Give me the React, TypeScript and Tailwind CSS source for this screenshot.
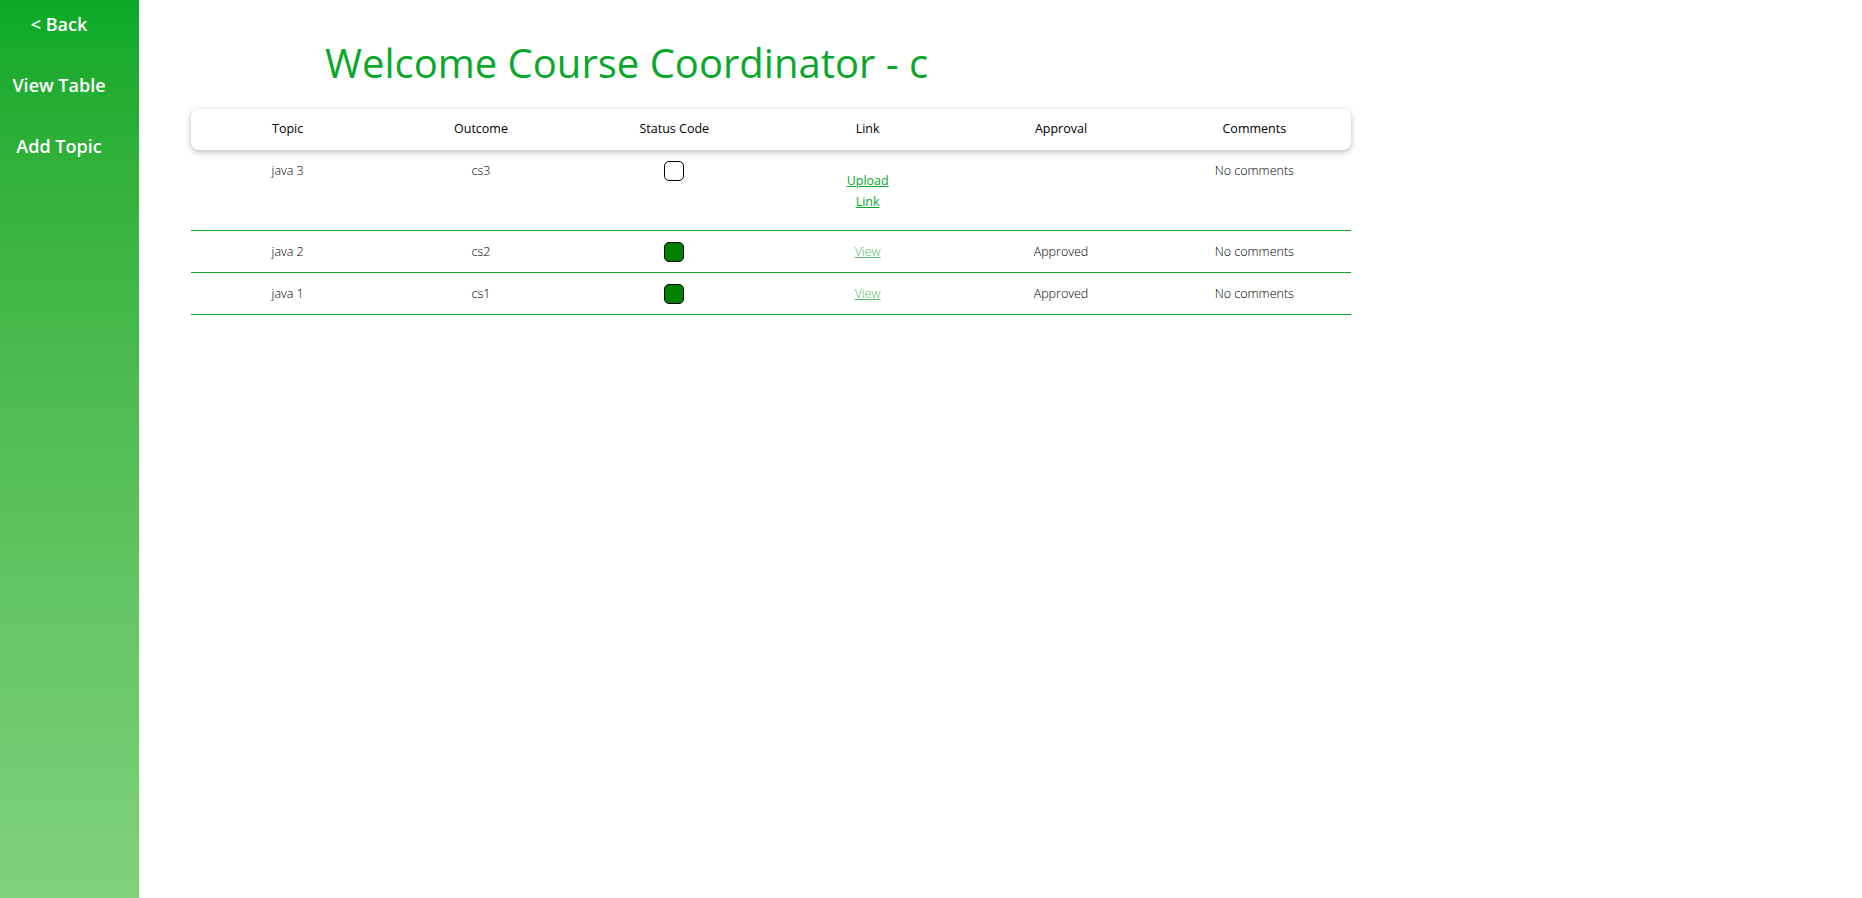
import React from 'react';

type Row = {
  topic: string;
  outcome: string;
  done: boolean;
  approval: string;
  comments: string;
};

const rows: Row[] = [
  { topic: 'java 3', outcome: 'cs3', done: false, approval: '', comments: 'No comments' },
  { topic: 'java 2', outcome: 'cs2', done: true, approval: 'Approved', comments: 'No comments' },
  { topic: 'java 1', outcome: 'cs1', done: true, approval: 'Approved', comments: 'No comments' },
];

const headers = ['Topic', 'Outcome', 'Status Code', 'Link', 'Approval', 'Comments'];

function Sidebar() {
  return (
    <aside className="w-[139px] shrink-0 min-h-screen bg-gradient-to-b from-[#07a926] to-[#80d27d]">
      <nav className="w-[118px] flex flex-col items-center pt-[11px] gap-[34px] text-white text-[18px] font-semibold">
        <a className="leading-[27px] cursor-pointer">&lt; Back</a>
        <a className="leading-[27px] cursor-pointer">View Table</a>
        <a className="leading-[27px] cursor-pointer">Add Topic</a>
      </nav>
    </aside>
  );
}

function StatusBox({ done }: { done: boolean }) {
  return (
    <span
      className={
        done
          ? 'inline-block w-5 h-5 rounded-[5px] border-[1.5px] border-black bg-[#008000]'
          : 'inline-block w-5 h-5 rounded-[5px] border-[1.5px] border-black bg-white'
      }
    />
  );
}

export default function App() {
  return (
    <div className="flex min-h-screen bg-white" style={{ fontFamily: '"Open Sans", "Noto Sans", sans-serif' }}>
      <Sidebar />

      <main className="flex-1 pl-[52px]">
        <h1 className="pl-[134px] pt-[37px] pb-[20px] text-[40px] leading-[52px] font-normal text-[#09a82a]">
          Welcome Course Coordinator - c
        </h1>

        <div className="w-[1160px]">
          {/* header */}
          <div className="grid grid-cols-6 h-[41px] items-center rounded-lg bg-white shadow-[0_2px_6px_rgba(0,0,0,0.28)] text-[12.5px] text-black">
            {headers.map((h) => (
              <div key={h} className="text-center">{h}</div>
            ))}
          </div>

          {rows.map((r, i) => (
            <div
              key={r.topic}
              className={
                i === 0
                  ? 'grid grid-cols-6 items-start border-b border-[#0aa82a] pt-[11px] pb-[18px] text-[12.5px] font-light text-black'
                  : 'grid grid-cols-6 items-start border-b border-[#0aa82a] pt-[11px] pb-[10px] text-[12.5px] font-light text-black'
              }
            >
              <div className="text-center leading-[20px]">{r.topic}</div>
              <div className="text-center leading-[20px]">{r.outcome}</div>
              <div className="flex justify-center">
                <StatusBox done={r.done} />
              </div>
              <div className="text-center leading-[20px]">
                {r.done ? (
                  <a className="underline text-[#4fb864] cursor-pointer">View</a>
                ) : (
                  <a className="inline-block mt-[9px] underline font-medium text-[#09a82a] leading-[21px] cursor-pointer">
                    Upload
                    <br />
                    Link
                  </a>
                )}
              </div>
              <div className="text-center leading-[20px]">{r.approval}</div>
              <div className="text-center leading-[20px]">{r.comments}</div>
            </div>
          ))}
        </div>
      </main>
    </div>
  );
}
